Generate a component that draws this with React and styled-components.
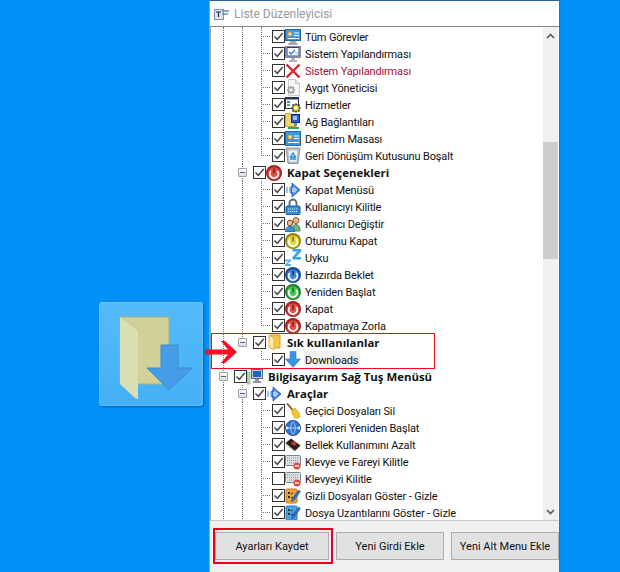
import React from 'react'
import styled, { createGlobalStyle } from 'styled-components'

const GlobalStyle = createGlobalStyle`
    html, body { margin: 0; padding: 0; }
    body { font-family: Roboto, "Open Sans", sans-serif; }
`

/* ---------- icons ---------- */

const Panel = ({ stand }) => (
    <svg width="16" height="16" viewBox="0 0 16 16">
        <rect x="0.5" y="0.5" width="15" height={stand ? 11 : 14} fill="#3a9be4" stroke="#1d6bab" />
        <circle cx="5" cy={stand ? 5 : 6} r="2.4" fill="#f5a63a" />
        <circle cx="5" cy={stand ? 5 : 6} r="0.9" fill="#fff" />
        <path d={stand ? 'M9 4h5M9 6.500h5M3 9.500h11' : 'M9 5h5M9 7.500h5M3 11.500h11'} stroke="#fff" strokeWidth="1.200" />
        {stand && <path d="M5.500 12h5l1 2h1v2h-9v-2h1z" fill="#a3a9af" />}
    </svg>
)

const SysConfig = () => (
    <svg width="16" height="16" viewBox="0 0 16 16">
        <rect x="0.5" y="0.5" width="15" height="11" fill="#c9c9c9" stroke="#8a8a8a" />
        <rect x="2" y="1.500" width="12" height="8.500" fill="#fff" stroke="#1c3fb5" />
        <path d="M4 6l2 2 4-4" fill="none" stroke="#2b7bd6" strokeWidth="1.300" />
        <path d="M10 7h3" stroke="#7aa6dd" />
        <path d="M6 12h4v2h2v2H4v-2h2z" fill="#b5b5b5" />
    </svg>
)

const Cross = () => (
    <svg width="16" height="16" viewBox="0 0 16 16">
        <path d="M1.500 1.500l13 13M14.500 1.500l-13 13" stroke="#dc2430" strokeWidth="2.400" />
    </svg>
)

const Gear = ({ x, y, r, fill, stroke }) => (
    <g>
        <path
            d={`M${x - r - 1} ${y}h${2 * r + 2}M${x} ${y - r - 1}v${2 * r + 2}M${x - r} ${y - r}l${2 * r} ${2 * r}M${x + r} ${y - r}l${-2 * r} ${2 * r}`}
            stroke={stroke}
            strokeWidth="1.600"
        />
        <circle cx={x} cy={y} r={r} fill={fill} stroke={stroke} strokeWidth="0.800" />
        <circle cx={x} cy={y} r={r / 2.4} fill="#fff" />
    </g>
)

const DevicePage = () => (
    <svg width="16" height="17" viewBox="0 0 16 17">
        <path d="M3.500 0.500h7l4 4v12h-11z" fill="#f7f7f7" stroke="#c8c8c8" />
        <path d="M10.500 0.500v4h4" fill="#e4e4e4" stroke="#c8c8c8" />
        <Gear x={6} y={11} r={3} fill="#bcbcbc" stroke="#9a9a9a" />
    </svg>
)

const Services = () => (
    <svg width="16" height="16" viewBox="0 0 16 16">
        <rect x="0.500" y="0.500" width="13" height="11" fill="#fff" stroke="#26305f" />
        <rect x="1" y="1" width="12" height="1.500" fill="#26305f" />
        <rect x="2" y="4" width="3" height="2" fill="#2f8fd8" />
        <rect x="2" y="7" width="3" height="2" fill="#45b060" />
        <Gear x={11} y={11} r={3.500} fill="#f7e51a" stroke="#1b1b1b" />
    </svg>
)

const Network = () => (
    <svg width="16" height="17" viewBox="0 0 16 17">
        <path d="M0.500 0.500h5l1 2h5v11h-11z" fill="#f3d76e" stroke="#c9a63d" />
        <rect x="6.500" y="1.500" width="8" height="8" fill="#2a5fc4" stroke="#12306f" />
        <rect x="8" y="3" width="4" height="4" fill="#9cc4f2" />
        <path d="M9 10h3v3h-3z" fill="#7a8aa0" />
        <path d="M3 14h11v2H3z" fill="#35a853" />
    </svg>
)

const Recycle = () => (
    <svg width="16" height="17" viewBox="0 0 16 17">
        <path d="M1 1h14l-2 15.500H3z" fill="#b9c0c6" stroke="#8c949b" />
        <path d="M3.500 3.500h9l-1 11h-7z" fill="#eef3f7" />
        <path d="M8 6l2.500 4h-5z" fill="none" stroke="#1f87d6" strokeWidth="1.400" />
        <path d="M5 12h6" stroke="#1f87d6" strokeWidth="1.400" />
    </svg>
)

const Power = ({ c, d }) => (
    <svg width="16" height="16" viewBox="0 0 16 16">
        <circle cx="8" cy="8" r="8" fill={d} />
        <circle cx="8" cy="8.500" r="6.200" fill={c} />
        <path d="M4.800 6a4.300 4.300 0 1 0 6.400 0" fill="none" stroke="#fff" strokeWidth="1.800" />
        <path d="M8 3.500v5" stroke={d} strokeWidth="2" />
    </svg>
)

const ArrowMenu = () => (
    <svg width="16" height="16" viewBox="0 0 16 16">
        <path d="M1 5h2v6H1zM4 5h2v6H4z" fill="#9fc4ee" />
        <path d="M7 4.500V1l8 7-8 7v-3.500H6v-7z" fill="#3d7fe0" stroke="#2a5ab0" strokeWidth="0.800" />
        <path d="M8.500 4v2H7v4h1.500v2l4-4z" fill="#a8cdf7" />
    </svg>
)

const Lock = () => (
    <svg width="16" height="17" viewBox="0 0 16 17">
        <path d="M4.500 8V5a3.500 3.500 0 0 1 7 0v3" fill="none" stroke="#5c6670" strokeWidth="1.800" />
        <rect x="1" y="8" width="14" height="8.500" rx="1" fill="#2f8fd8" stroke="#1b5f9e" />
        <path d="M3 11h10M3 13.500h10" stroke="#cfe6fa" strokeDasharray="1 1" />
    </svg>
)

const Users = () => (
    <svg width="16" height="16" viewBox="0 0 16 16">
        <circle cx="11" cy="4.500" r="3" fill="#e8b48c" stroke="#a4562c" />
        <path d="M7 15c0-5 2-6.500 4-6.500s4 1.500 4 6.500z" fill="#6fb77c" stroke="#3f8a52" />
        <circle cx="5" cy="7" r="2.800" fill="#eec09c" stroke="#7a4a26" />
        <path d="M0.500 16c0-4 2-5.500 4.500-5.500S9.500 12 9.500 16z" fill="#3d8fd0" stroke="#24659e" />
    </svg>
)

const Sleep = () => (
    <svg width="16" height="17" viewBox="0 0 16 17">
        <path d="M7.500 0h8.500v2.500L11 8h5v2.500H7.500V8l5-5.500h-5z" fill="#2fa6ec" />
        <path d="M0 10.500h6V12l-3.500 3H6v2H0v-1.500L3.500 12.500H0z" fill="#4fb2ea" />
    </svg>
)

const FolderSmall = () => (
    <svg width="16" height="17" viewBox="0 0 16 17">
        <path d="M4 1h10v13H4z" fill="#f1c84c" stroke="#cf9f27" />
        <path d="M3 1l5 3v12l-5-3z" fill="#fbe9a8" stroke="#d8b24a" />
    </svg>
)

const DownArrow = () => (
    <svg width="16" height="17" viewBox="0 0 16 17">
        <path d="M5 0.500h6V8h4.500L8 16.500 0.500 8H5z" fill="#3d94e2" stroke="#2f7fc9" strokeWidth="0.600" />
    </svg>
)

const Computer = () => (
    <svg width="16" height="16" viewBox="0 0 16 16">
        <rect x="0" y="3" width="3" height="12" fill="#b8d4b0" stroke="#7f9a80" strokeWidth="0.600" />
        <rect x="4.500" y="0.500" width="11" height="9" fill="#c8ccd2" stroke="#5c6670" />
        <rect x="6" y="2" width="8" height="6" fill="#1f63c8" />
        <path d="M8 10h4v2h2v2H6v-2h2z" fill="#8f96a0" />
    </svg>
)

const Broom = () => (
    <svg width="16" height="16" viewBox="0 0 16 16">
        <path d="M2 0.500l7 8" stroke="#8a5a24" strokeWidth="1.800" />
        <path d="M7 7l3-2 5 6-1 1 1 2-2 0 0 1.500-2-1-1 1-3-5z" fill="#f2c62e" stroke="#c79a1c" strokeWidth="0.600" />
    </svg>
)

const Globe = () => (
    <svg width="16" height="16" viewBox="0 0 16 16">
        <circle cx="8" cy="8" r="7.500" fill="#2e73cf" stroke="#1d4f9a" />
        <path d="M8 1.500c3 3 3 10 0 13M8 1.500c-3 3-3 10 0 13M1 8h14" fill="none" stroke="#bfe0fa" strokeWidth="0.800" />
        <path d="M1 6l3 2-3 2zM15 6l-3 2 3 2z" fill="#e8f4fd" />
    </svg>
)

const Chip = () => (
    <svg width="16" height="16" viewBox="0 0 16 16">
        <path d="M0.500 6L6 1.500l9.500 7-5.500 5.500z" fill="#2b211c" />
        <path d="M6 6l3-2 3 2.500-3 2.500z" fill="#d8342a" />
        <path d="M1 8l8 6 6-5" fill="none" stroke="#a6783a" strokeWidth="1" strokeDasharray="1 1" />
    </svg>
)

const Keyboard = () => (
    <svg width="16" height="17" viewBox="0 0 16 17">
        <rect x="0.500" y="2.500" width="15" height="10" rx="1" fill="#dbe1e6" stroke="#7e868d" />
        <path d="M2 5h12M2 7.500h12M4 10h8" stroke="#8b949b" strokeDasharray="1 1" />
        <circle cx="12" cy="13" r="3.500" fill="#e5463e" />
        <path d="M10 13h4" stroke="#fff" strokeWidth="1.400" />
    </svg>
)

const NotePen = ({ c, d }) => (
    <svg width="16" height="16" viewBox="0 0 16 16">
        <rect x="1" y="1" width="11" height="14" rx="1" fill={c} stroke={d} />
        <path d="M3 4h2v2H3zM3 8h2v2H3z" fill="#25313d" />
        <path d="M6 6l2-1M6 10l2-1" stroke="#25313d" />
        <path d="M7 11l6.500-9 2 1.500-6.500 9-2.500 1z" fill="#3a6fc4" stroke="#1f3f82" strokeWidth="0.500" />
    </svg>
)

const icons = {
    tasks: <Panel stand />,
    panel: <Panel />,
    config: <SysConfig />,
    cross: <Cross />,
    device: <DevicePage />,
    services: <Services />,
    network: <Network />,
    recycle: <Recycle />,
    red: <Power c="#e0504a" d="#a3201e" />,
    yellow: <Power c="#e6d838" d="#8f8416" />,
    blue: <Power c="#3d86dc" d="#17488e" />,
    green: <Power c="#4cc85a" d="#1c7d2a" />,
    arrow: <ArrowMenu />,
    lock: <Lock />,
    users: <Users />,
    sleep: <Sleep />,
    folder: <FolderSmall />,
    down: <DownArrow />,
    pc: <Computer />,
    broom: <Broom />,
    globe: <Globe />,
    chip: <Chip />,
    keyboard: <Keyboard />,
    noteOrange: <NotePen c="#f2a23a" d="#c67f1e" />,
    noteBlue: <NotePen c="#45a5e6" d="#2a7cba" />,
}

/* ---------- tree data ---------- */

// guides: one letter per indent column. l = vertical line, t = tee, e = elbow, x = expander, s = empty
const rows = [
    { guides: 'llt', icon: 'tasks', label: 'Tüm Görevler' },
    { guides: 'llt', icon: 'config', label: 'Sistem Yapılandırması' },
    { guides: 'llt', icon: 'cross', label: 'Sistem Yapılandırması', red: true },
    { guides: 'llt', icon: 'device', label: 'Aygıt Yöneticisi' },
    { guides: 'llt', icon: 'services', label: 'Hizmetler' },
    { guides: 'llt', icon: 'network', label: 'Ağ Bağlantıları' },
    { guides: 'llt', icon: 'panel', label: 'Denetim Masası' },
    { guides: 'lle', icon: 'recycle', label: 'Geri Dönüşüm Kutusunu Boşalt' },
    { guides: 'lx', icon: 'red', label: 'Kapat Seçenekleri', bold: true },
    { guides: 'llt', icon: 'arrow', label: 'Kapat Menüsü' },
    { guides: 'llt', icon: 'lock', label: 'Kullanıcıyı Kilitle' },
    { guides: 'llt', icon: 'users', label: 'Kullanıcı Değiştir' },
    { guides: 'llt', icon: 'yellow', label: 'Oturumu Kapat' },
    { guides: 'llt', icon: 'sleep', label: 'Uyku' },
    { guides: 'llt', icon: 'blue', label: 'Hazırda Beklet' },
    { guides: 'llt', icon: 'green', label: 'Yeniden Başlat' },
    { guides: 'llt', icon: 'red', label: 'Kapat' },
    { guides: 'lle', icon: 'red', label: 'Kapatmaya Zorla' },
    { guides: 'lX', icon: 'folder', label: 'Sık kullanılanlar', bold: true },
    { guides: 'lse', icon: 'down', label: 'Downloads', selected: true },
    { guides: 'x', icon: 'pc', label: 'Bilgisayarım Sağ Tuş Menüsü', bold: true },
    { guides: 'lx', icon: 'arrow', label: 'Araçlar', bold: true },
    { guides: 'llt', icon: 'broom', label: 'Geçici Dosyaları Sil' },
    { guides: 'llt', icon: 'globe', label: 'Exploreri Yeniden Başlat' },
    { guides: 'llt', icon: 'chip', label: 'Bellek Kullanımını Azalt' },
    { guides: 'llt', icon: 'keyboard', label: 'Klevye ve Fareyi Kilitle' },
    { guides: 'llt', icon: 'keyboard', label: 'Klevyeyi Kilitle', off: true },
    { guides: 'llt', icon: 'noteOrange', label: 'Gizli Dosyaları Göster - Gizle' },
    { guides: 'llt', icon: 'noteBlue', label: 'Dosya Uzantılarını Göster - Gizle' },
]

const TreeRow = ({ guides, icon, label, bold, red, selected, off }) => (
    <Row>
        {guides.split('').map((g, i) =>
            g === 'x' || g === 'X' ? (
                <Guide key={i} $kind={g}>
                    <Expander />
                </Guide>
            ) : (
                <Guide key={i} $kind={g} />
            )
        )}
        <Check $on={!off}>
            {!off && (
                <svg width="11" height="11" viewBox="0 0 11 11">
                    <path d="M1.500 5.500l2.800 2.800 5.400-6.300" fill="none" stroke="#4a4a4a" strokeWidth="1.500" />
                </svg>
            )}
        </Check>
        <IconBox>{icons[icon]}</IconBox>
        <Label $bold={bold} $red={red} $selected={selected}>{label}</Label>
    </Row>
)

const App = () => {
    return (
        <Page>
            <GlobalStyle />
            <LeftSide>
                <Tile>
                    <svg width="104" height="104" viewBox="0 0 104 104">
                        <path d="M21 15h49v67H21z" fill="#cfd199" stroke="#a8b07a" />
                        <path d="M21 15l18 14v68l-3-1v-14H39L21 82z" fill="#d9deb5" />
                        <path d="M21 82l15 14V82z" fill="#d9deb5" />
                        <path d="M62 43h17v23h14L70 88 48 66h14z" fill="#459de8" stroke="#3f8ac8" />
                    </svg>
                </Tile>
            </LeftSide>

            <Window>
                <TitleBar>
                    <svg width="16" height="16" viewBox="0 0 16 16">
                        <rect x="0.500" y="3.500" width="9" height="10" fill="#dfe6ee" stroke="#7f93aa" />
                        <path d="M2 6h5M4.500 6v5" stroke="#1f2b45" strokeWidth="1.200" />
                        <path d="M8 5h7M8 8h6" stroke="#5b8ec4" strokeWidth="1.500" />
                    </svg>
                    <Title>Liste Düzenleyicisi</Title>
                </TitleBar>

                <TreeArea>
                    <Tree>
                        <TopGap>
                            <Guide $kind="l" />
                            <Guide $kind="l" />
                            <Guide $kind="l" />
                        </TopGap>
                        {rows.map((r, i) => (
                            <TreeRow key={i} {...r} />
                        ))}
                    </Tree>
                    <ScrollBar>
                        <ScrollBtn>
                            <svg width="9" height="6" viewBox="0 0 9 6">
                                <path d="M1 5l3.500-3.500L8 5" fill="none" stroke="#5a5a5a" strokeWidth="1.700" />
                            </svg>
                        </ScrollBtn>
                        <Thumb />
                        <ScrollGap />
                        <ScrollBtn>
                            <svg width="9" height="6" viewBox="0 0 9 6">
                                <path d="M1 1l3.500 3.500L8 1" fill="none" stroke="#5a5a5a" strokeWidth="1.700" />
                            </svg>
                        </ScrollBtn>
                    </ScrollBar>
                </TreeArea>

                <Footer>
                    <Button $w={112}>Ayarları Kaydet</Button>
                    <Button $w={106}>Yeni Girdi Ekle</Button>
                    <Button $w={106}>Yeni Alt Menu Ekle</Button>
                </Footer>
            </Window>

            <RowMark />
            <ButtonMark />
            <PointerArrow width="34" height="24" viewBox="0 0 34 24">
                <path d="M0 9.500h23L16 1h4l12 11-12 11h-4l7-8.500-23 0z" fill="#ff0a1e" />
            </PointerArrow>
        </Page>
    )
}

export default App

/* ---------- styles ---------- */

const Page = styled.div`
    position: relative;
    width: 620px;
    height: 572px;
    overflow: hidden;
    display: flex;
    background-color: #0091f7;
`

const LeftSide = styled.div`
    width: 209px;
    flex: none;
    padding: 302px 0 0 99px;
    box-sizing: border-box;
`

const Tile = styled.div`
    width: 104px;
    height: 104px;
    border-radius: 3px;
    background: linear-gradient(180deg, #55bafa, #45b0f6);
    box-shadow: 1px 1px 2px rgba(0, 60, 120, 0.55), inset 0 0 0 1px rgba(255, 255, 255, 0.12);
`

const Window = styled.div`
    width: 351px;
    height: 572px;
    flex: none;
    display: flex;
    flex-direction: column;
    box-sizing: border-box;
    background-color: #f0f0f0;
    border-top: 1px solid #2b5f96;
    border-left: 1px solid #9aa3ad;
    border-right: 1px solid #4a6a90;
`

const TitleBar = styled.div`
    height: 25px;
    flex: none;
    display: flex;
    align-items: center;
    gap: 4px;
    padding-left: 4px;
    background-color: #fff;
    border-bottom: 1px solid #85858f;
`

const Title = styled.span`
    font-size: 12px;
    color: #999;
`

const TreeArea = styled.div`
    height: 494px;
    flex: none;
    display: flex;
    background-color: #fff;
    border-left: 1px solid #a0a0a0;
    border-right: 1px solid #fff;
    border-bottom: 1px solid #c8c8c8;
    box-sizing: border-box;
`

const Tree = styled.div`
    flex: 1;
    min-width: 0;
    overflow: hidden;
    padding-left: 3px;
`

const Row = styled.div`
    height: 17px;
    display: flex;
    align-items: center;
    white-space: nowrap;
`

const TopGap = styled.div`
    height: 1px;
    display: flex;
    overflow: hidden;
`

const dots = 'repeating-linear-gradient(to bottom, #707070 0 1px, transparent 1px 2px)'
const dotsAcross = 'repeating-linear-gradient(to right, #707070 0 1px, transparent 1px 2px)'

const guideBackground = ({ $kind }) => {
    const vertical = `${dots} 9px 0 / 1px 100% no-repeat`
    const upper = `${dots} 9px 0 / 1px 9px no-repeat`
    const branch = `${dotsAcross} 9px 8px / 10px 1px no-repeat`
    if ($kind === 'l' || $kind === 'x') return vertical
    if ($kind === 't') return `${branch}, ${vertical}`
    if ($kind === 'e') return `${branch}, ${upper}`
    if ($kind === 'X') return upper
    return 'none'
}

const Guide = styled.span`
    width: 19px;
    height: 17px;
    flex: none;
    display: flex;
    align-items: center;
    justify-content: center;
    background: ${guideBackground};
`

const Expander = styled.span`
    width: 7px;
    height: 7px;
    display: flex;
    align-items: center;
    justify-content: center;
    border: 1px solid #a0a0a0;
    border-radius: 1px;
    background: linear-gradient(180deg, #fff, #dcdcdc);
    &::before {
        content: '';
        width: 5px;
        height: 1px;
        background-color: #4060a8;
    }
`

const Check = styled.span`
    width: 11px;
    height: 11px;
    flex: none;
    margin-left: 1px;
    border: 1px solid #333;
    background-color: #fff;
    display: flex;
`

const IconBox = styled.span`
    width: 16px;
    height: 17px;
    flex: none;
    display: flex;
    align-items: center;
    justify-content: center;
`

const Label = styled.span`
    height: 17px;
    line-height: ${({ $bold }) => ($bold ? '17px' : '19px')};
    margin-left: ${({ $bold }) => ($bold ? '4px' : '3px')};
    padding: 0 2px 0 1px;
    font-family: ${({ $bold }) => ($bold ? '"Open Sans", sans-serif' : 'Roboto, sans-serif')};
    font-size: ${({ $bold }) => ($bold ? '11.4px' : '11px')};
    font-weight: ${({ $bold }) => ($bold ? 700 : 400)};
    letter-spacing: ${({ $bold }) => ($bold ? '0' : '-0.15px')};
    color: ${({ $red }) => ($red ? '#a50f3c' : '#111')};
    background-color: ${({ $selected }) => ($selected ? '#f0f0f0' : 'transparent')};
`

const ScrollBar = styled.div`
    width: 15px;
    flex: none;
    display: flex;
    flex-direction: column;
    background-color: #f0f0f0;
`

const ScrollBtn = styled.div`
    height: 17px;
    flex: none;
    display: flex;
    align-items: center;
    justify-content: center;
`

const Thumb = styled.div`
    height: 117px;
    flex: none;
    margin-top: 98px;
    background-color: #cdcdcd;
`

const ScrollGap = styled.div`
    flex: 1;
`

const Footer = styled.div`
    flex: 1;
    display: flex;
    gap: 7px;
    padding: 11px 0 0 5px;
    background-color: #f0f0f0;
`

const Button = styled.div`
    width: ${({ $w }) => $w}px;
    height: 26px;
    border: 1px solid #adadad;
    background-color: #e1e1e1;
    color: #111;
    font-size: 11px;
    display: flex;
    align-items: center;
    justify-content: center;
`

/* annotations drawn over the screenshot */

const RowMark = styled.div`
    position: absolute;
    left: 211px;
    top: 333px;
    width: 222px;
    height: 34px;
    border: 1px solid #f00a1e;
`

const ButtonMark = styled.div`
    position: absolute;
    left: 213px;
    top: 528px;
    width: 116px;
    height: 32px;
    border: 2px solid #e8001c;
`

const PointerArrow = styled.svg`
    position: absolute;
    left: 205px;
    top: 340px;
`
